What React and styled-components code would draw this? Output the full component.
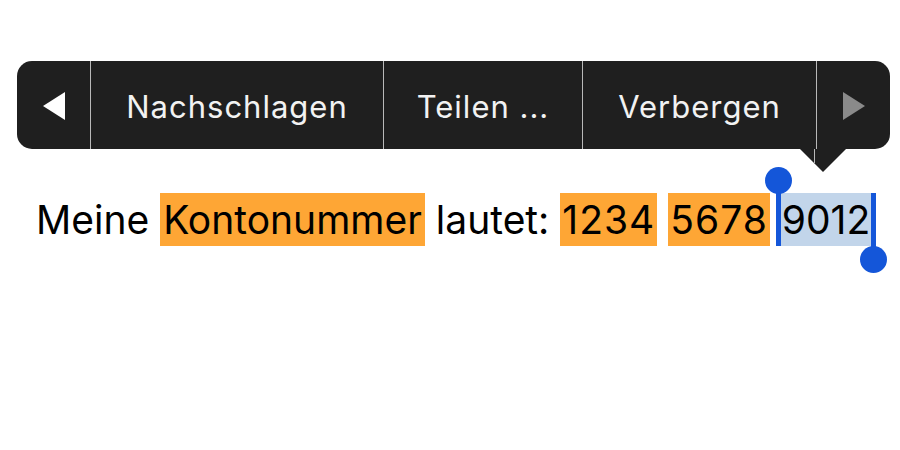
import React from "react";
import styled, { createGlobalStyle } from "styled-components";

const Global = createGlobalStyle`
  html, body { margin: 0; padding: 0; background: #fff; }
  body { font-family: Inter, "Noto Sans", sans-serif; }
`;

const Page = styled.div`
  width: 900px;
  height: 450px;
  box-sizing: border-box;
  padding-top: 61px;
  display: flex;
  flex-direction: column;
`;

const MenuWrap = styled.div`
  position: relative;
  margin-left: 17px;
  width: 873px;
`;

const Menu = styled.div`
  display: flex;
  height: 88px;
  background: #1f1f1f;
  border-radius: 15px;
  overflow: hidden;
`;

const Segment = styled.div`
  flex: 0 0 ${(p) => p.$w}px;
  display: flex;
  align-items: center;
  justify-content: center;
  color: #f2f2f2;
  font-size: 31px;
  letter-spacing: 1px;
  padding-top: 2px;
  border-left: ${(p) => (p.$first ? "none" : "1px solid #b9b9b9")};
  box-sizing: border-box;
`;

const Pointer = styled.div`
  position: absolute;
  left: ${(p) => p.$x}px;
  top: 88px;
  width: 0;
  height: 0;
  border-left: 23px solid transparent;
  border-right: 23px solid transparent;
  border-top: 23px solid #1f1f1f;
`;

const PointerLine = styled.div`
  position: absolute;
  left: 797px;
  top: 88px;
  width: 1px;
  height: 14px;
  background: #b9b9b9;
`;

const Sentence = styled.div`
  margin-top: 44px;
  margin-left: 36px;
  font-size: 39px;
  line-height: 53px;
  height: 53px;
  color: #000;
  white-space: pre;
`;

const Mark = styled.span`
  display: inline-block;
  height: 53px;
  background: ${(p) => (p.$sel ? "#c2d5ea" : "#fea635")};
  padding: 0 ${(p) => (p.$pad === undefined ? 2 : p.$pad)}px;
  letter-spacing: ${(p) => p.$ls || 0}px;
  position: relative;
`;

const Bar = styled.span`
  position: absolute;
  top: 0;
  bottom: ${(p) => (p.$end ? "-12px" : "0")};
  ${(p) => (p.$end ? "right: -5px;" : "left: -5px;")}
  width: 5px;
  background: #1456d9;
`;

const Knob = styled.span`
  position: absolute;
  width: 27px;
  height: 27px;
  border-radius: 50%;
  background: #1456d9;
  ${(p) =>
    p.$end
      ? "right: -16px; bottom: -27px;"
      : "left: -16px; top: -26px;"}
`;

const Tri = ({ dir, color }) => (
  <svg width="22" height="28" viewBox="0 0 22 28">
    {dir === "left" ? (
      <polygon points="22,0 22,28 0,14" fill={color} />
    ) : (
      <polygon points="0,0 0,28 22,14" fill={color} />
    )}
  </svg>
);

export default function App() {
  return (
    <>
      <Global />
      <Page>
        <MenuWrap>
          <Menu>
            <Segment $w={73} $first>
              <Tri dir="left" color="#ffffff" />
            </Segment>
            <Segment $w={293}>Nachschlagen</Segment>
            <Segment $w={199}>Teilen ...</Segment>
            <Segment $w={234}>Verbergen</Segment>
            <Segment $w={74}>
              <Tri dir="right" color="#8a8a8a" />
            </Segment>
          </Menu>
          <Pointer $x={783} />
          <PointerLine />
        </MenuWrap>
        <Sentence>
          Meine <Mark $pad={3}>Kontonummer</Mark> lautet: <Mark $ls={1}>1234</Mark>{" "}
          <Mark $ls={1}>5678</Mark>{" "}
          <Mark $sel $pad={1}>
            <Bar />
            <Knob />
            9012
            <Bar $end />
            <Knob $end />
          </Mark>
        </Sentence>
      </Page>
    </>
  );
}
